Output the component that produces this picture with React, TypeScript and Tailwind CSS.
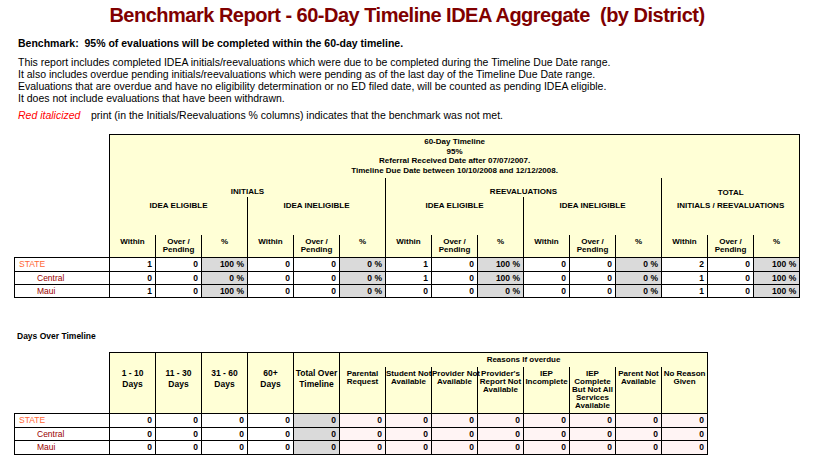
import React from "react";

const t1Rows = [
  { label: "STATE", state: true, v: ["1", "0", "100 %", "0", "0", "0 %", "1", "0", "100 %", "0", "0", "0 %", "2", "0", "100 %"], h: "h-[14px]" },
  { label: "Central", state: false, v: ["0", "0", "0 %", "0", "0", "0 %", "1", "0", "100 %", "0", "0", "0 %", "1", "0", "100 %"], h: "h-[13px]" },
  { label: "Maui", state: false, v: ["1", "0", "100 %", "0", "0", "0 %", "0", "0", "0 %", "0", "0", "0 %", "1", "0", "100 %"], h: "h-[13px]" },
];

const t2Rows = [
  { label: "STATE", state: true, h: "h-[14px]" },
  { label: "Central", state: false, h: "h-[13px]" },
  { label: "Maui", state: false, h: "h-[14px]" },
];

const labelCls = (state: boolean) =>
  "border border-black text-left text-[8.5px] leading-none p-0 " +
  (state ? "pl-[4px] text-[#ff6633]" : "pl-[22px] text-[#990000]");

const numCls = "border border-black text-right pr-[3px] p-0 text-[8.5px] font-bold leading-none text-black";

export default function App() {
  const fifteen = Array.from({ length: 15 });
  const thirteen = Array.from({ length: 13 });
  return (
    <div className="w-[814px] h-[466px] bg-white text-black font-['Liberation_Sans',Arial,sans-serif] overflow-hidden">
      <div className="pt-[5px] text-center text-[20px] leading-[20px] tracking-[-0.5px] font-bold text-[#800000] whitespace-pre">
        {"Benchmark Report - 60-Day Timeline IDEA Aggregate  (by District)"}
      </div>

      <div className="pl-[18px] mt-[12px] text-[10.5px] leading-[12px] font-bold whitespace-pre">
        {"Benchmark:  95% of evaluations will be completed within the 60-day timeline."}
      </div>

      <div className="pl-[18px] mt-[7px] text-[10.5px] leading-[12px]">
        <div>This report includes completed IDEA initials/reevaluations which were due to be completed during the Timeline Due Date range.</div>
        <div>It also includes overdue pending initials/reevaluations which were pending as of the last day of the Timeline Due Date range.</div>
        <div>Evaluations that are overdue and have no eligibility determination or no ED filed date, will be counted as pending IDEA eligible.</div>
        <div>It does not include evaluations that have been withdrawn.</div>
      </div>

      <div className="pl-[18px] mt-[5px] text-[10.5px] leading-[12px] flex">
        <span className="italic text-[#ff0000] w-[73px]">Red italicized</span>
        <span>print (in the Initials/Reevaluations % columns) indicates that the benchmark was not met.</span>
      </div>

      <table className="ml-[14px] mt-[13px] border-collapse table-fixed w-[785px]">
        <colgroup>
          <col className="w-[95px]" />
          {fifteen.map((_, i) => (
            <col key={i} className="w-[46px]" />
          ))}
        </colgroup>
        <thead>
          <tr className="h-[43px]">
            <td rowSpan={4} className="p-0"></td>
            <th colSpan={15} className="border-t border-x border-black bg-[#ffffd6] align-top pt-[2px] text-[8px] leading-[9.5px] font-bold">
              60-Day Timeline
              <br />
              95%
              <br />
              Referral Received Date after 07/07/2007.
              <br />
              Timeline Due Date between 10/10/2008 and 12/12/2008.
            </th>
          </tr>
          <tr className="h-[19px]">
            <th colSpan={6} className="border-x border-black bg-[#ffffd6] align-bottom pb-[1px] text-[8px] leading-[9px] font-bold">INITIALS</th>
            <th colSpan={6} className="border-x border-black bg-[#ffffd6] align-bottom pb-[1px] text-[8px] leading-[9px] font-bold">REEVALUATIONS</th>
            <th colSpan={3} rowSpan={2} className="border-x border-black bg-[#ffffd6] align-top pt-[8px] text-[8px] leading-[13px] font-bold">
              TOTAL
              <br />
              INITIALS / REEVALUATIONS
            </th>
          </tr>
          <tr className="h-[38px]">
            {["IDEA ELIGIBLE", "IDEA INELIGIBLE", "IDEA ELIGIBLE", "IDEA INELIGIBLE"].map((t, i) => (
              <th key={i} colSpan={3} className="border-x border-black bg-[#ffffd6] align-top pt-[4px] text-[8px] leading-[9px] font-bold">
                {t}
              </th>
            ))}
          </tr>
          <tr className="h-[23px]">
            {fifteen.map((_, i) => (
              <th key={i} className="border-x border-black bg-[#ffffd6] align-top pt-[3px] p-0 text-[8px] leading-[8px] font-bold">
                {i % 3 === 0 ? "Within" : i % 3 === 1 ? (
                  <>
                    Over /
                    <br />
                    Pending
                  </>
                ) : "%"}
              </th>
            ))}
          </tr>
        </thead>
        <tbody>
          {t1Rows.map((r) => (
            <tr key={r.label} className={r.h}>
              <td className={labelCls(r.state)}>{r.label}</td>
              {r.v.map((v, i) => (
                <td key={i} className={numCls + (i % 3 === 2 ? " bg-[#dadada]" : " bg-white")}>
                  {v}
                </td>
              ))}
            </tr>
          ))}
        </tbody>
      </table>

      <div className="pl-[17px] mt-[33px] text-[8.5px] leading-[10px] font-bold">Days Over Timeline</div>

      <table className="ml-[14px] mt-[11px] border-collapse table-fixed w-[693px]">
        <colgroup>
          <col className="w-[95px]" />
          {thirteen.map((_, i) => (
            <col key={i} className="w-[46px]" />
          ))}
        </colgroup>
        <thead>
          <tr className="h-[14px]">
            <td rowSpan={2} className="p-0"></td>
            {[
              ["1 - 10", "Days"],
              ["11 - 30", "Days"],
              ["31 - 60", "Days"],
              ["60+", "Days"],
              ["Total Over", "Timeline"],
            ].map((t, i) => (
              <th key={i} rowSpan={2} className="border border-black bg-[#ffffd6] align-top p-0 pt-[15px] text-[8.5px] leading-[11px] font-bold whitespace-nowrap">
                {t[0]}
                <br />
                {t[1]}
              </th>
            ))}
            <th colSpan={8} className="border-t border-x border-black bg-[#ffffd6] align-middle p-0 text-[8px] leading-[9px] font-bold">
              Reasons If overdue
            </th>
          </tr>
          <tr className="h-[47px]">
            {[
              ["Parental", "Request"],
              ["Student Not", "Available"],
              ["Provider Not", "Available"],
              ["Provider's", "Report Not", "Available"],
              ["IEP", "Incomplete"],
              ["IEP", "Complete", "But Not All", "Services", "Available"],
              ["Parent Not", "Available"],
              ["No Reason", "Given"],
            ].map((lines, i) => (
              <th key={i} className="border-x border-black bg-[#ffffd6] align-top p-0 pt-[3px] text-[8px] leading-[8px] font-bold whitespace-nowrap">
                {lines.map((l, j) => (
                  <div key={j}>{l}</div>
                ))}
              </th>
            ))}
          </tr>
        </thead>
        <tbody>
          {t2Rows.map((r) => (
            <tr key={r.label} className={r.h}>
              <td className={labelCls(r.state)}>{r.label}</td>
              {thirteen.map((_, i) => (
                <td key={i} className={numCls + (i < 4 ? " bg-white" : i === 4 ? " bg-[#dadada]" : " bg-[#fff4f4]")}>
                  0
                </td>
              ))}
            </tr>
          ))}
        </tbody>
      </table>
    </div>
  );
}
